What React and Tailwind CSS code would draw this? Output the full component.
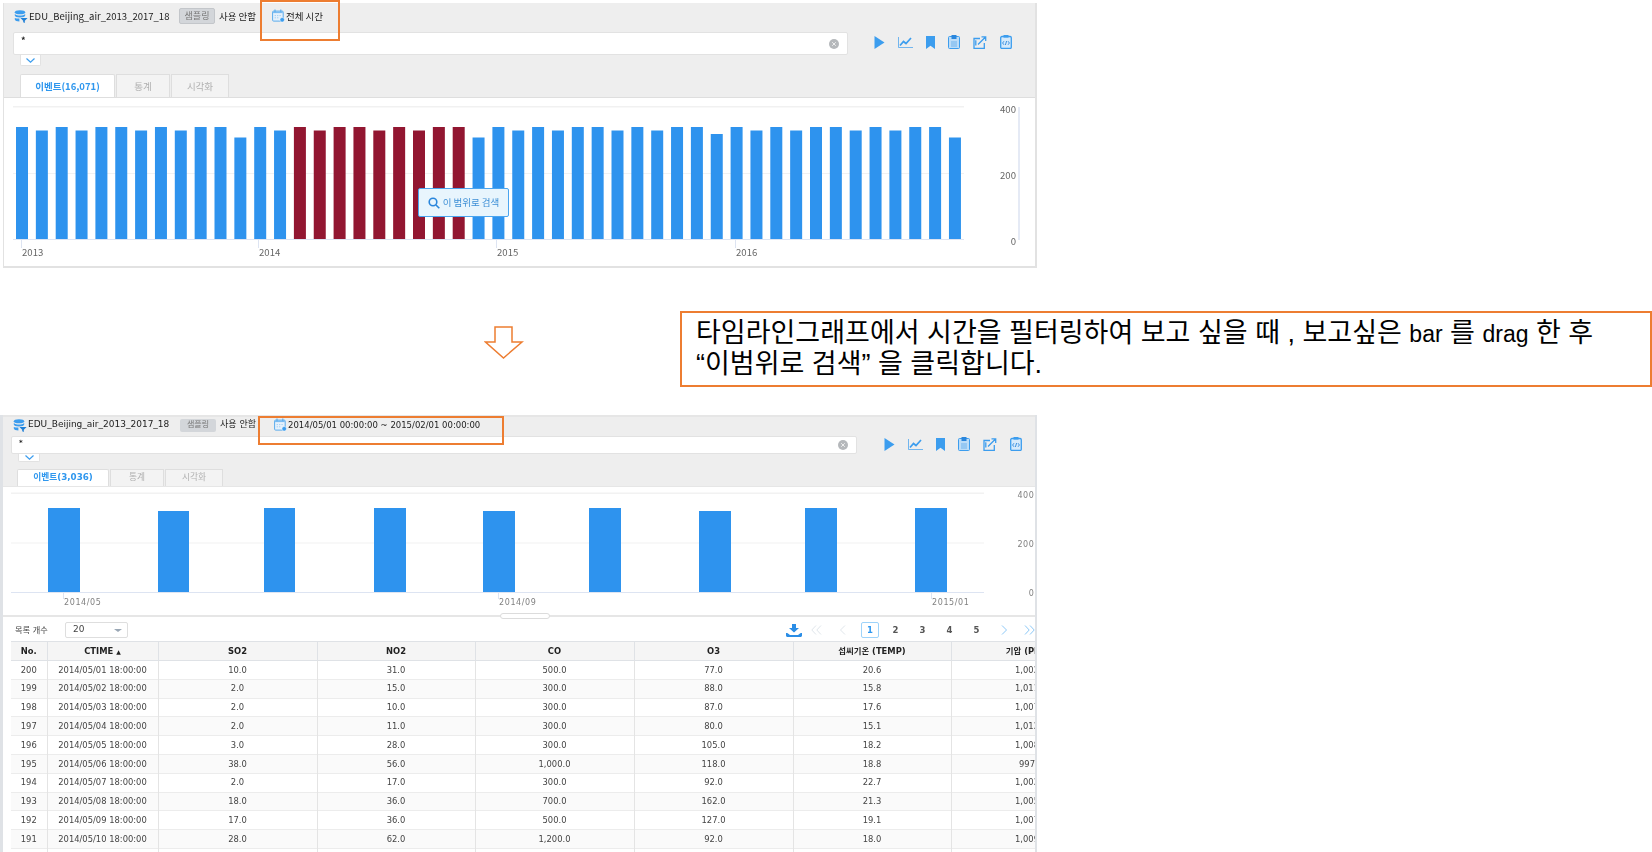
import React from 'react';

const BLUE = '#2e93ee';
const RED = '#921631';
const ICON = '#3c9dee';

const KR_SANS = 'font-["Noto_Sans_CJK_KR",sans-serif]';
const KR_DEJAVU = 'font-["DejaVu_Sans","Noto_Sans_CJK_KR",sans-serif]';

// bar heights in the overview chart: t tall, m medium, s short, k a bit taller than short
const overviewBars = 'tmtmttmtmttstmtmttmtmttstmtmttmtmttktmtmttmtmtts'.split('');
const barHeights = { t: 112, m: 108.5, k: 105, s: 101.5 };

const filteredBars = [
  [48, 32, 84],
  [158, 31, 81],
  [264, 31, 84],
  [374, 32, 84],
  [483, 32, 81],
  [589, 32, 84],
  [699, 32, 81],
  [805, 32, 84],
  [915, 32, 84],
];

const columns = [36, 111, 159, 158, 159, 159, 158, 160];
const headers = ['No.', 'CTIME', 'SO2', 'NO2', 'CO', 'O3', '섭씨기온 (TEMP)', '기압 (PRES)'];
const rows = [
  ['200', '2014/05/01 18:00:00', '10.0', '31.0', '500.0', '77.0', '20.6', '1,002.0'],
  ['199', '2014/05/02 18:00:00', '2.0', '15.0', '300.0', '88.0', '15.8', '1,011.0'],
  ['198', '2014/05/03 18:00:00', '2.0', '10.0', '300.0', '87.0', '17.6', '1,007.0'],
  ['197', '2014/05/04 18:00:00', '2.0', '11.0', '300.0', '80.0', '15.1', '1,012.0'],
  ['196', '2014/05/05 18:00:00', '3.0', '28.0', '300.0', '105.0', '18.2', '1,008.0'],
  ['195', '2014/05/06 18:00:00', '38.0', '56.0', '1,000.0', '118.0', '18.8', '997.0'],
  ['194', '2014/05/07 18:00:00', '2.0', '17.0', '300.0', '92.0', '22.7', '1,002.0'],
  ['193', '2014/05/08 18:00:00', '18.0', '36.0', '700.0', '162.0', '21.3', '1,005.0'],
  ['192', '2014/05/09 18:00:00', '17.0', '36.0', '500.0', '127.0', '19.1', '1,007.0'],
  ['191', '2014/05/10 18:00:00', '28.0', '62.0', '1,200.0', '92.0', '18.0', '1,009.0'],
  ['', '', '', '', '', '', '', ''],
];

const DatabaseIcon = () => (
  <svg width="14" height="13" viewBox="0 0 14 13" className="shrink-0">
    <ellipse cx="6" cy="2.2" rx="5.2" ry="2" fill={ICON} />
    <path d="M.8 4v1.4c0 1.1 2.3 2 5.2 2s5.2-.9 5.2-2V4C10 5 8 5.5 6 5.5S2 5 .8 4z" fill={ICON} />
    <path d="M.8 8v1.6c0 1.1 2.3 2 4.6 2V8.6C3.6 8.6 1.8 8.4.8 8z" fill={ICON} />
    <path d="M6.4 8h7.2l-2.8 2.7V13l-1.6-.8v-1.5z" fill="#1f7fd6" />
  </svg>
);

const CalendarIcon = () => (
  <svg width="13" height="14" viewBox="0 0 13 14" className="shrink-0">
    <rect x=".6" y="2.1" width="10.6" height="10" rx="1" fill="#e6f1fb" stroke="#5aaced" />
    <rect x="1" y="2.5" width="9.800" height="1.600" fill="#7dbdf2" />
    <path d="M3 .6v2.6M8.8.6v2.6" stroke="#5aaced" strokeWidth="1.1" />
    <path d="M2.600 6.600h1.400M5 6.600h1.400M7.400 6.600h1.400M2.600 8.800h1.400M5 8.800h1.400" stroke="#a5cff3" />
    <circle cx="10.200" cy="10.800" r="2.300" fill={ICON} stroke="#fff" strokeWidth=".5" />
  </svg>
);

const ToolbarIcons = ({ gaps }) => (
  <div className={`flex items-center ${gaps}`}>
    <svg width="11" height="13" viewBox="0 0 11 13"><path d="M.5 0 10.500 6.500.5 13z" fill={ICON} /></svg>
    <svg width="15" height="13" viewBox="0 0 15 13" fill="none" stroke={ICON}>
      <path d="M.5 1v10.500h14.500" strokeWidth="1" opacity=".7" />
      <path d="M2 9.500 5.500 5.500 8 7.500 13 2" strokeWidth="1.700" />
    </svg>
    <svg width="9" height="13" viewBox="0 0 9 13"><path d="M0 0h9v13L4.500 9.800 0 13z" fill={ICON} /></svg>
    <svg width="12" height="14" viewBox="0 0 12 14">
      <rect x=".5" y="1.500" width="11" height="12" rx="1" fill="#bcdcf7" stroke={ICON} />
      <rect x="3.500" y="0" width="5" height="4" fill="#2a86dc" />
      <path d="M3 7h6M3 9h6M3 11h6" stroke="#6fb3ee" />
    </svg>
    <svg width="14" height="13" viewBox="0 0 14 13" fill="none" stroke={ICON} strokeWidth="1.300">
      <path d="M7 2.500H1v9.800h10.300V7" />
      <path d="M3.400 5H2.800v4.600M5 8.500 12.500 1M8.500.8h4.200V5" />
    </svg>
    <svg width="12" height="14" viewBox="0 0 12 14" fill="none">
      <rect x=".7" y="1.500" width="10.600" height="12" rx="1.200" fill="#d6eafb" stroke={ICON} strokeWidth="1.300" />
      <rect x="3.500" y="0" width="5" height="2.600" fill={ICON} />
      <path d="M4 6.200 2.600 8 4 9.800M8 6.200 9.400 8 8 9.800M6.600 6 5.400 10" stroke="#2a86dc" strokeWidth=".9" />
    </svg>
  </div>
);

const ClearIcon = () => (
  <svg width="10" height="10" viewBox="0 0 10 10" className="shrink-0">
    <circle cx="5" cy="5" r="5" fill="#b5b8bb" />
    <path d="M3.200 3.200 6.800 6.800M6.800 3.200 3.200 6.800" stroke="#eee" strokeWidth="1" />
  </svg>
);

const Chevron = () => (
  <svg width="9" height="5" viewBox="0 0 9 5" fill="none" stroke="#3c9dee" strokeWidth="1.200">
    <path d="M.5.5 4.500 4.200 8.500.5" />
  </svg>
);

const PageArrow = ({ d, color, w = 8 }) => (
  <svg width={w} height="10" viewBox={`0 0 ${w} 10`} fill="none" stroke={color} strokeWidth="1">
    <path d={d} />
  </svg>
);

const Tabs = ({ label, font, height, widths, size }) => (
  <div className={`flex ${height} ${font} ${size}`}>
    <div className={`${widths[0]} flex items-center justify-center rounded-t-[2px] border border-b-0 border-[#dedede] bg-white font-bold text-[#2f97ee]`}>{label}</div>
    <div className={`${widths[1]} ml-px flex items-center justify-center border border-b-0 border-[#dedede] bg-[#f3f3f3] text-[#b0b0b0]`}>통계</div>
    <div className={`${widths[2]} ml-px flex items-center justify-center border border-b-0 border-[#dedede] bg-[#f3f3f3] text-[#b0b0b0]`}>시각화</div>
  </div>
);

const OverviewChart = () => (
  <svg viewBox="4 98 1031 167" width="1031" height="167" className="block" fontFamily="Noto Sans CJK KR, sans-serif" fontSize="9.6" fill="#666">
    <rect x="13" y="106" width="951" height="1.500" fill="#f1f1f1" />
    <rect x="13" y="173" width="951" height="1" fill="#f1f1f1" />
    {overviewBars.map((b, i) => {
      const h = barHeights[b];
      const x = 16 + i * 19.85;
      const red = i >= 14 && i < 23;
      return <rect key={i} x={x} y={239 - h} width="12" height={h} fill={red ? RED : BLUE} />;
    })}
    <rect x="13" y="239" width="951" height="1" fill="#dde4f2" />
    {[[21, '2013'], [258, '2014'], [496, '2015'], [735, '2016']].map(([x, t]) => (
      <g key={t}>
        <rect x={x} y="240" width="1" height="8" fill="#dde4f2" />
        <text x={x + 1} y="256">{t}</text>
      </g>
    ))}
    <rect x="1018.500" y="107" width="1" height="133" fill="#ccd6eb" />
    <text x="1016" y="113" textAnchor="end">400</text>
    <text x="1016" y="179" textAnchor="end">200</text>
    <text x="1016" y="245" textAnchor="end">0</text>
  </svg>
);

const FilteredChart = () => (
  <svg viewBox="3 487 1032 127" width="1032" height="127" className="block" fontFamily="DejaVu Sans, sans-serif" fontSize="8" fill="#808080" letterSpacing=".6">
    <rect x="11" y="492.500" width="973" height="1.500" fill="#f2f2f2" />
    <rect x="11" y="542.500" width="973" height="1" fill="#f2f2f2" />
    {filteredBars.map(([x, w, h]) => <rect key={x} x={x} y={592 - h} width={w} height={h} fill={BLUE} />)}
    <rect x="11" y="592" width="973" height="1" fill="#dde4f2" />
    {[[63, '2014/05'], [498, '2014/09'], [931, '2015/01']].map(([x, t]) => (
      <g key={t}>
        <rect x={x} y="593" width="1" height="6" fill="#dde4f2" />
        <text x={x + 1} y="604.500">{t}</text>
      </g>
    ))}
    <text x="1034.500" y="498" textAnchor="end">400</text>
    <text x="1034.500" y="547" textAnchor="end">200</text>
    <text x="1034.500" y="596" textAnchor="end">0</text>
  </svg>
);

const Pager = () => (
  <div className={`flex items-center ${KR_DEJAVU} text-[8.5px] font-bold text-[#555]`}>
    <svg width="16" height="13" viewBox="0 0 16 13" className="mr-[9px]">
      <path d="M6 0h4v4h3L8 8.500 3 4h3z" fill="#2a8de6" />
      <path d="M0 9c1 0 1.500 0 2 .5L4 11h8l2-1.500c.5-.5 1-.5 2-.5v2.500c0 .8-.7 1.500-1.500 1.500h-13C.7 13 0 12.300 0 11.500z" fill="#2a8de6" />
    </svg>
    <span className="flex w-[13px] justify-start"><PageArrow w={11} d="M5 .5 .8 5l4.200 4.500M10 .5 5.800 5l4.200 4.500" color="#dfe5ea" /></span>
    <span className="flex w-[37px] justify-center"><PageArrow d="M6 .5 1.500 5 6 9.500" color="#dfe5ea" /></span>
    <span className="flex h-[16px] w-[18px] items-center justify-center rounded-[2px] border border-[#9ed3fa] text-[#2f97ee]">1</span>
    <span className="ml-[3px] w-[27px] text-center">2</span>
    <span className="w-[27px] text-center">3</span>
    <span className="w-[27px] text-center">4</span>
    <span className="w-[27px] text-center">5</span>
    <span className="flex w-[27px] justify-center"><PageArrow d="M2 .5 6.500 5 2 9.500" color="#8cc8f7" /></span>
    <span className="flex w-[18px] justify-end"><PageArrow w={11} d="M1 .5 5.200 5 1 9.500M6 .5 10.200 5 6 9.500" color="#8cc8f7" /></span>
  </div>
);

const DataTable = () => (
  <div className="ml-[8px] mt-[2px] w-[1024px] overflow-hidden">
    <table className={`w-[1100px] table-fixed border-collapse ${KR_DEJAVU} text-[8.4px] text-[#444]`}>
      <colgroup>
        {columns.map((w, i) => <col key={i} style={{ width: w }} />)}
      </colgroup>
      <thead>
        <tr className="h-[19px] border-y border-[#dfe2e6] bg-[#f5f5f5] text-[#222]">
          {headers.map((h, i) => (
            <th key={h} className="border-r border-[#dfe2e6] p-0 text-center font-bold whitespace-nowrap">
              {h}
              {i === 1 && <span className="ml-[3px] text-[6px]">▲</span>}
            </th>
          ))}
        </tr>
      </thead>
      <tbody>
        {rows.map((row, r) => (
          <tr key={r} className={`h-[18.8px] border-b border-[#ececec] ${r % 2 ? 'bg-[#fafafa]' : 'bg-white'}`}>
            {row.map((c, i) => (
              <td key={i} className="border-r border-[#e4e4e4] p-0 text-center whitespace-nowrap">{c}</td>
            ))}
          </tr>
        ))}
      </tbody>
    </table>
  </div>
);

const TopPanel = () => (
  <div className="ml-[3px] mt-[3px] h-[265px] w-[1034px] overflow-hidden border-b-2 border-l border-r-2 border-[#e2e2e2] bg-white blur-[0.4px]">
    <div className="flex h-[95px] flex-col border-b border-[#dedede] bg-[#eeeeee]">
      <div className={`flex h-[29px] items-center pb-[3px] pl-[10px] ${KR_SANS} text-[9.5px] text-[#222]`}>
        <DatabaseIcon />
        <span className="ml-px w-[143px] whitespace-nowrap">EDU_Beijing_air_2013_2017_18</span>
        <span className="ml-[7px] flex h-[16px] w-[36px] items-center justify-center rounded-[2px] border border-[#c3c6ca] bg-[#d3d6da] text-[9px] text-[#777]">샘플링</span>
        <span className="ml-[4px] w-[37px] whitespace-nowrap">사용 안함</span>
        <span className="ml-[16px]"><CalendarIcon /></span>
        <span className="ml-px">전체 시간</span>
      </div>
      <div className="flex h-[23px] items-center pl-[9px]">
        <div className={`flex h-[23px] w-[835px] items-center justify-between rounded-[2px] border border-[#e2e2e2] bg-white pl-[7px] pr-[8px] ${KR_SANS} text-[9px] font-bold text-[#222]`}>
          <span className="-mt-[5px]">*</span>
          <ClearIcon />
        </div>
        <div className="mb-[3px] ml-[26px]"><ToolbarIcons gaps="gap-x-[13px]" /></div>
      </div>
      <div className="ml-[16px] flex h-[11px] w-[21px] items-center justify-center rounded-b-[2px] border-x border-b border-[#e2e2e2] bg-white"><Chevron /></div>
      <div className="ml-[16px] mt-[8px]">
        <Tabs label="이벤트(16,071)" font={KR_SANS} size="text-[9.5px]" height="h-[23px]" widths={['w-[95px]', 'w-[54px]', 'w-[58px]']} />
      </div>
    </div>
    <div className="relative">
      <OverviewChart />
      <div className={`absolute left-[414px] top-[90px] flex h-[29px] w-[91px] items-center justify-center gap-x-[3px] rounded-[2px] border border-[#4aa5f0] bg-[#e8f5fd] ${KR_SANS} text-[9.5px] text-[#3d8fd6]`}>
        <svg width="12" height="12" viewBox="0 0 12 12" fill="none" stroke="#2a86dc" strokeWidth="1.600">
          <circle cx="5" cy="5" r="3.800" />
          <path d="M8 8 11.300 11.300" />
        </svg>
        이 범위로 검색
      </div>
    </div>
  </div>
);

const BottomPanel = () => (
  <div className="h-[437px] w-[1037px] overflow-hidden border-l-[3px] border-r-2 border-[#dfe2e6] bg-white blur-[0.4px]">
    <div className="flex h-[72px] flex-col border-b border-t-2 border-[#e6e6e6] bg-[#eeeeee]">
      <div className={`flex h-[20px] items-center pb-[3px] pl-[10px] ${KR_DEJAVU} text-[9px] text-[#222]`}>
        <DatabaseIcon />
        <span className="ml-px w-[143px] whitespace-nowrap">EDU_Beijing_air_2013_2017_18</span>
        <span className="ml-[9px] flex h-[13px] w-[36px] items-center justify-center rounded-[2px] bg-[#d3d6da] text-[8px] text-[#777]">샘플링</span>
        <span className="ml-[4px] w-[37px] whitespace-nowrap">사용 안함</span>
        <span className="ml-[17px]"><CalendarIcon /></span>
        <span className="ml-px whitespace-nowrap text-[8.5px]">2014/05/01 00:00:00 ~ 2015/02/01 00:00:00</span>
      </div>
      <div className="flex h-[18px] items-center pl-[8px]">
        <div className="flex h-[18px] w-[846px] items-center justify-between rounded-[2px] border border-[#e2e2e2] bg-white pl-[7px] pr-[8px] font-['DejaVu_Sans'] text-[7px] font-bold text-[#222]">
          <span className="-mt-[5px]">*</span>
          <ClearIcon />
        </div>
        <div className="mb-[2px] ml-[27px]"><ToolbarIcons gaps="gap-x-[13px]" /></div>
      </div>
      <div className="ml-[15px] flex h-[8px] w-[22px] items-center justify-center rounded-b-[2px] border-x border-b border-[#e2e2e2] bg-white"><Chevron /></div>
      <div className="ml-[14px] mt-[7px]">
        <Tabs label="이벤트(3,036)" font={KR_DEJAVU} size="text-[8.7px]" height="h-[17px]" widths={['w-[92px]', 'w-[54px]', 'w-[58px]']} />
      </div>
    </div>
    <div className="relative h-[130px] border-b-2 border-[#e6e6e6]">
      <FilteredChart />
      <div className="absolute -bottom-[4px] left-[497px] h-[6px] w-[50px] rounded-full border border-[#dcdcdc] bg-white" />
    </div>
    <div className={`flex h-[22px] items-center justify-between pl-[12px] pt-[4px] ${KR_DEJAVU} text-[8.2px] text-[#444]`}>
      <div className="flex items-center">
        <span className="w-[50px]">목록 개수</span>
        <div className="flex h-[16px] w-[63px] items-center justify-between rounded-[2px] border border-[#dedede] pl-[7px] pr-[5px] text-[9px]">
          20
          <span className="h-0 w-0 border-x-[4px] border-t-[3px] border-x-transparent border-t-[#9aa7b5]" />
        </div>
      </div>
      <Pager />
    </div>
    <DataTable />
  </div>
);

const Callout = () => (
  <div className="ml-[156px] mt-[43px] h-[76px] w-[973px] whitespace-nowrap border-2 border-[#ed7d31] pl-[14px] pt-[5px] font-['Liberation_Sans','Noto_Sans_CJK_KR',sans-serif] text-[27px] leading-[30px] text-black">
    타임라인그래프에서 시간을 필터링하여 보고 싶을 때 , 보고싶은 <span className="text-[23px]">bar</span> 를 <span className="text-[23px]">drag</span> 한 후<br />
    “이범위로 검색” 을 클릭합니다.
  </div>
);

const DownArrow = () => (
  <svg width="40" height="33" viewBox="0 0 40 33" className="ml-[484px] mt-[58px] shrink-0" fill="#fff" stroke="#ed7d31" strokeWidth="1.500">
    <path d="M11 1h17v15h10L19.500 32 1.500 16H11z" />
  </svg>
);

export default function App() {
  return (
    <div className="relative h-[852px] w-[1652px] overflow-hidden bg-white">
      <TopPanel />
      <div className="flex h-[147px]">
        <DownArrow />
        <Callout />
      </div>
      <BottomPanel />
      {/* orange highlight boxes over the time filter */}
      <div className="absolute left-[260px] top-0 h-[41px] w-[80px] border-2 border-[#ed7d31]" />
      <div className="absolute left-[258px] top-[416px] h-[29px] w-[246px] border-2 border-[#ed7d31]" />
    </div>
  );
}
